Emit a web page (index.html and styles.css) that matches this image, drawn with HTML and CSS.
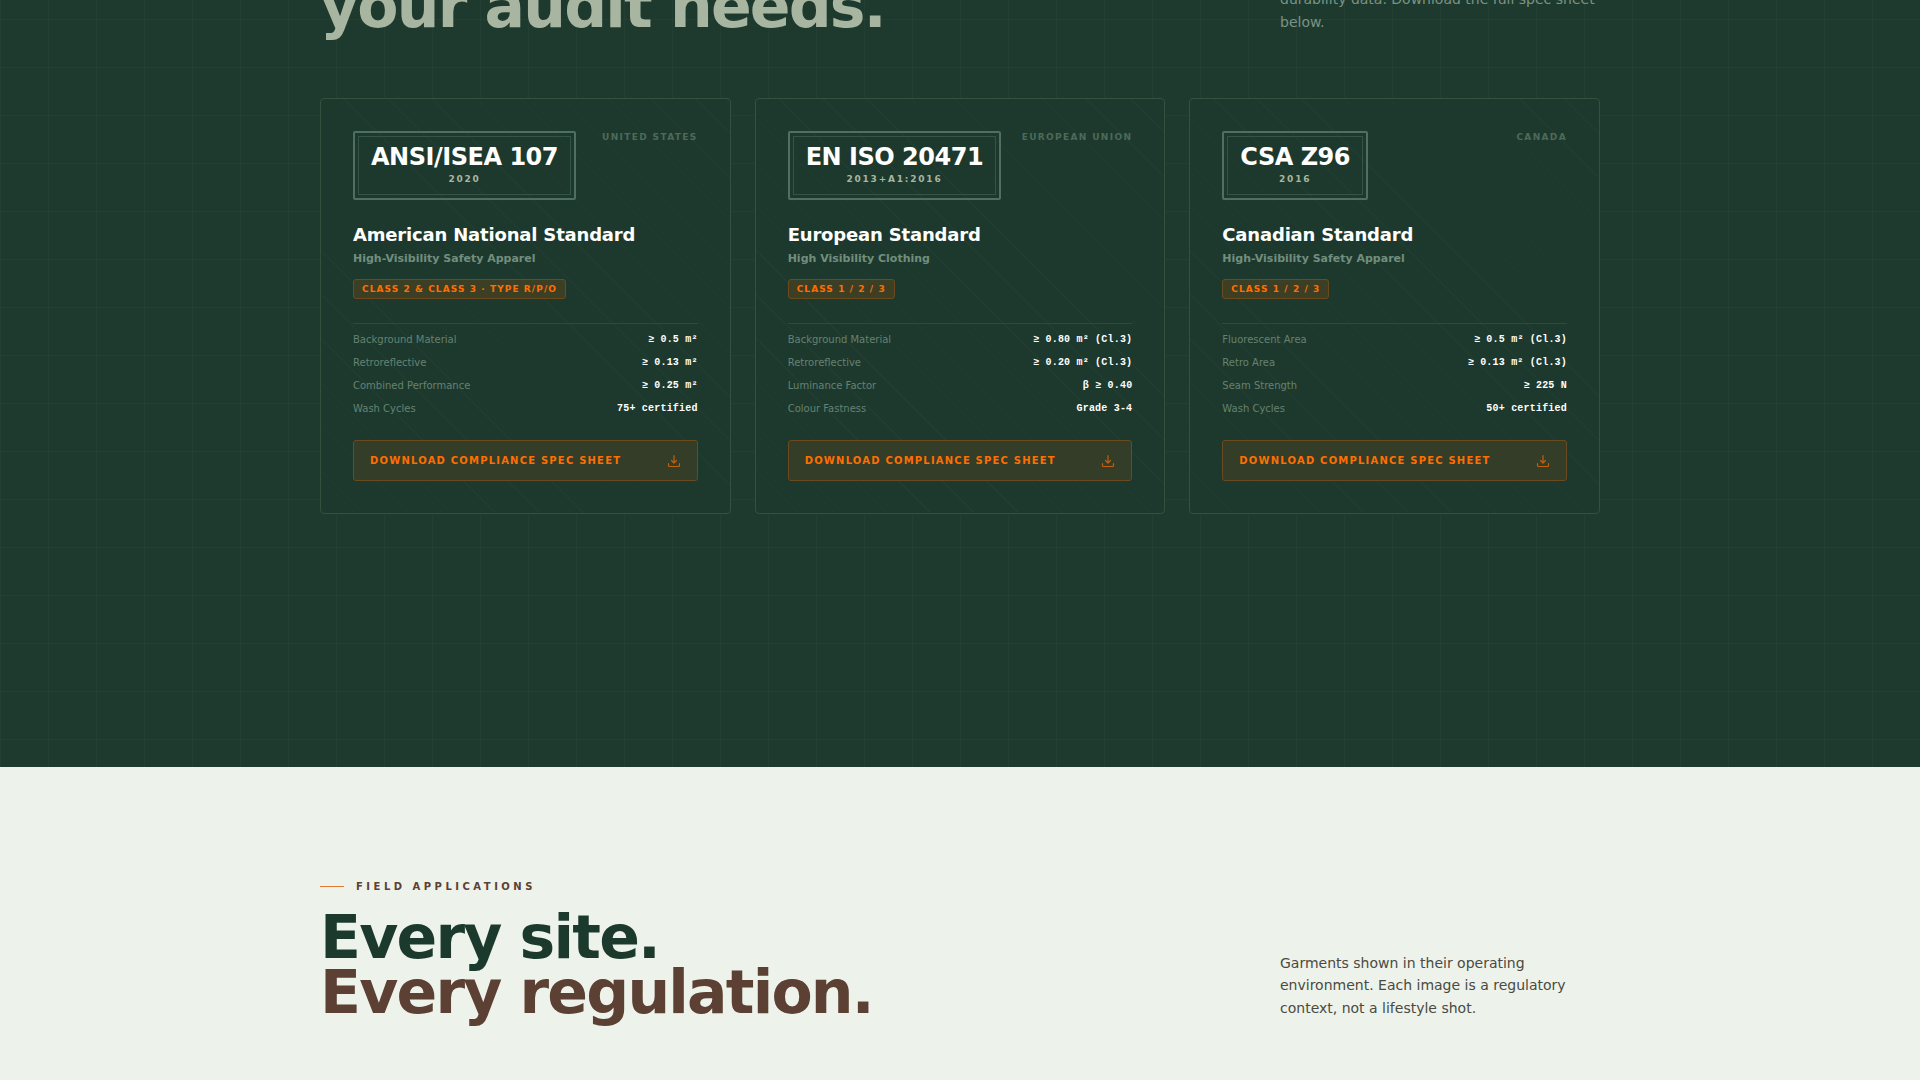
FILE: index.html
```html
<!DOCTYPE html>
<html lang="en">
<head>
<meta charset="utf-8">
<meta name="viewport" content="width=device-width, initial-scale=1">
<title>Compliance Standards</title>
<link rel="stylesheet" href="styles.css">
</head>
<body>
<svg class="sprite" aria-hidden="true">
  <symbol id="download" viewBox="0 0 14 14">
    <path d="M7 1.5v7.5M4.5 6.5l2.500 2.500 2.500-2.500M1.500 9.500v2a1 1 0 0 0 1 1h9a1 1 0 0 0 1-1v-2" fill="none" stroke="currentColor" stroke-width="1.2" stroke-linecap="round" stroke-linejoin="round"/>
  </symbol>
</svg>
<section class="standards">
  <div class="container">
    <header class="head">
      <h2 class="title title-light">your audit needs.</h2>
      <p class="intro intro-light">durability data. Download the full spec sheet below.</p>
    </header>
    <div class="cards">
      <article class="card">
        <div class="card-top">
          <div class="stamp"><span class="stamp-code">ANSI/ISEA 107</span><span class="stamp-year">2020</span></div>
          <span class="region">United States</span>
        </div>
        <h3 class="name">American National Standard</h3>
        <p class="subject">High-Visibility Safety Apparel</p>
        <span class="badge">Class 2 &amp; Class 3 · Type R/P/O</span>
        <table class="specs">
          <tr><th scope="row">Background Material</th><td>≥ 0.5 m²</td></tr>
          <tr><th scope="row">Retroreflective</th><td>≥ 0.13 m²</td></tr>
          <tr><th scope="row">Combined Performance</th><td>≥ 0.25 m²</td></tr>
          <tr><th scope="row">Wash Cycles</th><td>75+ certified</td></tr>
        </table>
        <button class="download" type="button">Download Compliance Spec Sheet<svg class="icon" aria-hidden="true"><use href="#download"/></svg></button>
      </article>
      <article class="card">
        <div class="card-top">
          <div class="stamp"><span class="stamp-code">EN ISO 20471</span><span class="stamp-year">2013+A1:2016</span></div>
          <span class="region">European Union</span>
        </div>
        <h3 class="name">European Standard</h3>
        <p class="subject">High Visibility Clothing</p>
        <span class="badge">Class 1 / 2 / 3</span>
        <table class="specs">
          <tr><th scope="row">Background Material</th><td>≥ 0.80 m² (Cl.3)</td></tr>
          <tr><th scope="row">Retroreflective</th><td>≥ 0.20 m² (Cl.3)</td></tr>
          <tr><th scope="row">Luminance Factor</th><td>β ≥ 0.40</td></tr>
          <tr><th scope="row">Colour Fastness</th><td>Grade 3-4</td></tr>
        </table>
        <button class="download" type="button">Download Compliance Spec Sheet<svg class="icon" aria-hidden="true"><use href="#download"/></svg></button>
      </article>
      <article class="card">
        <div class="card-top">
          <div class="stamp"><span class="stamp-code">CSA Z96</span><span class="stamp-year">2016</span></div>
          <span class="region">Canada</span>
        </div>
        <h3 class="name">Canadian Standard</h3>
        <p class="subject">High-Visibility Safety Apparel</p>
        <span class="badge">Class 1 / 2 / 3</span>
        <table class="specs">
          <tr><th scope="row">Fluorescent Area</th><td>≥ 0.5 m² (Cl.3)</td></tr>
          <tr><th scope="row">Retro Area</th><td>≥ 0.13 m² (Cl.3)</td></tr>
          <tr><th scope="row">Seam Strength</th><td>≥ 225 N</td></tr>
          <tr><th scope="row">Wash Cycles</th><td>50+ certified</td></tr>
        </table>
        <button class="download" type="button">Download Compliance Spec Sheet<svg class="icon" aria-hidden="true"><use href="#download"/></svg></button>
      </article>
    </div>
  </div>
</section>
<section class="field">
  <div class="container">
    <header class="head">
      <div>
        <p class="eyebrow">Field Applications</p>
        <h2 class="title">Every site.<br><span class="title-brown">Every regulation.</span></h2>
      </div>
      <p class="intro">Garments shown in their operating environment. Each image is a regulatory context, not a lifestyle shot.</p>
    </header>
  </div>
</section>
</body>
</html>
```
FILE: styles.css
```css
* { box-sizing: border-box; margin: 0; padding: 0; }

body {
  font-family: "DejaVu Sans", sans-serif;
  background: #edf2eb;
  color: #1e3a2f;
  overflow: hidden;
}

.sprite { display: none; }

.container { max-width: 1280px; margin: 0 auto; }

.head {
  display: grid;
  grid-template-columns: 1fr 320px;
  align-items: end;
}

.title {
  font-size: 60px;
  line-height: 55px;
  font-weight: 700;
  letter-spacing: -0.03em;
  color: #1b3a2d;
}
.title-light { color: #a8b5a0; }
.title-brown { color: #5c4033; }

.intro {
  padding-bottom: 1px;
  font-size: 14px;
  line-height: 1.6;
  color: #4a4a42;
}
.intro-light { color: #7a9484; }

/* The section starts above the fold, so its heading is partly scrolled away. */
.standards {
  margin-top: -21px;
  background-color: #1e3a2e;
  background-image:
    linear-gradient(rgba(255, 255, 255, 0.025) 1px, transparent 1px),
    linear-gradient(90deg, rgba(255, 255, 255, 0.025) 1px, transparent 1px);
  background-size: 48px 48px;
  background-position: 0 40px;
  padding-bottom: 253px;
}
.standards .head { margin-bottom: 64px; }

.cards {
  display: grid;
  grid-template-columns: repeat(3, 1fr);
  gap: 24px;
}

.card {
  border: 1px solid #35503f;
  border-radius: 4px;
  padding: 32px;
  background-color: #1d392d;
  background-image: repeating-linear-gradient(
    45deg,
    transparent 0 30px,
    rgba(255, 255, 255, 0.015) 30px 31px
  );
}

.card-top {
  display: flex;
  justify-content: space-between;
  align-items: flex-start;
  margin-bottom: 24px;
}

.stamp {
  display: flex;
  flex-direction: column;
  align-items: center;
  gap: 4px;
  padding: 12px 16px;
  border: 2px solid #4f6f60;
  border-radius: 2px;
  outline: 1px solid #355445;
  outline-offset: -6px;
}
.stamp-code {
  font-size: 24px;
  line-height: 24px;
  font-weight: 700;
  letter-spacing: -0.02em;
  color: #fff;
}
.stamp-year {
  font-size: 9px;
  line-height: 13px;
  font-weight: 700;
  letter-spacing: 0.2em;
  color: #a8b5a0;
}

.region {
  font-size: 9px;
  line-height: 12px;
  font-weight: 700;
  letter-spacing: 0.15em;
  text-transform: uppercase;
  color: #4d6a5a;
}

.name {
  font-size: 18px;
  line-height: 22px;
  letter-spacing: -0.01em;
  color: #fff;
}
.subject {
  margin-top: 5px;
  font-size: 11px;
  line-height: 16px;
  font-weight: 700;
  color: #728e7e;
}

.badge {
  display: inline-block;
  margin-top: 12px;
  padding: 3px 8px;
  border: 1px solid #6b4a1e;
  border-radius: 3px;
  background: #3d3f25;
  font-size: 9px;
  line-height: 12px;
  font-weight: 700;
  letter-spacing: 0.12em;
  text-transform: uppercase;
  color: #ff6f00;
}

.specs {
  width: 100%;
  margin-top: 24px;
  border-top: 1px solid #2e4a3c;
  border-collapse: separate;
  border-spacing: 0;
}
.specs th,
.specs td {
  height: 23px;
  padding-top: 8px;
  font-size: 10px;
  line-height: 15px;
}
.specs th {
  text-align: left;
  font-weight: 400;
  color: #658273;
}
.specs td {
  text-align: right;
  font-family: "Liberation Mono", monospace;
  font-weight: 700;
  letter-spacing: 0.02em;
  color: #fff;
}

.download {
  display: flex;
  justify-content: space-between;
  align-items: center;
  width: 100%;
  height: 41px;
  margin-top: 24px;
  padding: 0 16px;
  border: 1px solid #6b4a1e;
  border-radius: 3px;
  background: #333d28;
  font-family: inherit;
  font-size: 10px;
  font-weight: 700;
  letter-spacing: 0.12em;
  text-transform: uppercase;
  color: #ff6f00;
  cursor: pointer;
}
.icon { width: 14px; height: 14px; opacity: 0.7; }

.field { padding: 112px 0 64px; }

.eyebrow {
  display: flex;
  align-items: center;
  gap: 12px;
  margin-bottom: 16px;
  font-size: 10px;
  line-height: 15px;
  font-weight: 700;
  letter-spacing: 0.35em;
  text-transform: uppercase;
  color: #5c4033;
}
.eyebrow::before {
  content: "";
  width: 24px;
  height: 1px;
  background: #e07a30;
}
```
